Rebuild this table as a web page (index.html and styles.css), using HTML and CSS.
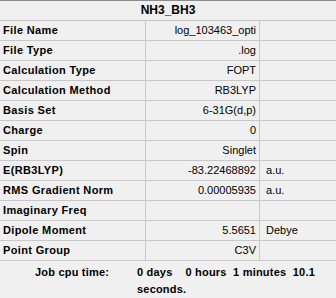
FILE: index.html
```html
<!DOCTYPE html>
<html>
<head>
    <meta charset="UTF-8" />
    <title>NH3_BH3</title>
    <link rel="stylesheet" href="styles.css">
</head>
<body>

<div class="summary">
  <div class="title">NH3_BH3</div>

  <div class="row"><span class="key">File Name</span><span class="val">log_103463_opti</span><span class="unit"></span></div>
  <div class="row"><span class="key">File Type</span><span class="val">.log</span><span class="unit"></span></div>
  <div class="row"><span class="key">Calculation Type</span><span class="val">FOPT</span><span class="unit"></span></div>
  <div class="row"><span class="key">Calculation Method</span><span class="val">RB3LYP</span><span class="unit"></span></div>
  <div class="row"><span class="key">Basis Set</span><span class="val">6-31G(d,p)</span><span class="unit"></span></div>
  <div class="row"><span class="key">Charge</span><span class="val">0</span><span class="unit"></span></div>
  <div class="row"><span class="key">Spin</span><span class="val">Singlet</span><span class="unit"></span></div>
  <div class="row"><span class="key">E(RB3LYP)</span><span class="val">-83.22468892</span><span class="unit">a.u.</span></div>
  <div class="row"><span class="key">RMS Gradient Norm</span><span class="val">0.00005935</span><span class="unit">a.u.</span></div>
  <div class="row"><span class="key">Imaginary Freq</span><span class="val"></span><span class="unit"></span></div>
  <div class="row"><span class="key">Dipole Moment</span><span class="val">5.5651</span><span class="unit">Debye</span></div>
  <div class="row"><span class="key">Point Group</span><span class="val">C3V</span><span class="unit"></span></div>

  <div class="cpu">
    <span class="cpu-label">Job cpu time:</span>
    <span class="cpu-value">0 days    0 hours  1 minutes  10.1 seconds.</span>
  </div>
</div>

</body>
</html>
```

FILE: styles.css
```css
* {
  box-sizing: border-box;
}

body {
  margin: 0;
  background: #f0f0f0;
  font-family: "Liberation Sans", Arial, sans-serif;
  font-size: 11px;
  color: #000;
}

.summary {
  width: 336px;
  border-top: 1px solid #8c8c8c;
}

/* Title bar */
.title {
  height: 20px;
  line-height: 19px;
  text-align: center;
  font-weight: bold;
  font-size: 12px;
  border-bottom: 1px solid #c4c4c4;
}

/* Property rows */
.row {
  display: grid;
  grid-template-columns: 146px 114px 76px;
  height: 20px;
  border-bottom: 1px solid #c8c8c8;
}

.row span {
  line-height: 19px;
  white-space: nowrap;
}

.key {
  padding-left: 3px;
  font-weight: bold;
  letter-spacing: 0.35px;
  border-right: 1px solid #c8c8c8;
}

.val {
  text-align: right;
  padding-right: 3px;
  border-right: 1px solid #c8c8c8;
}

.unit {
  padding-left: 6px;
}

/* Cpu time footer */
.cpu {
  display: flex;
  padding-top: 3px;
  font-weight: bold;
  letter-spacing: 0.2px;
  line-height: 17px;
}

.cpu-label {
  width: 137px;
  padding-left: 35px;
  flex-shrink: 0;
}

.cpu-value {
  width: 180px;
  white-space: pre-wrap;
}
```
